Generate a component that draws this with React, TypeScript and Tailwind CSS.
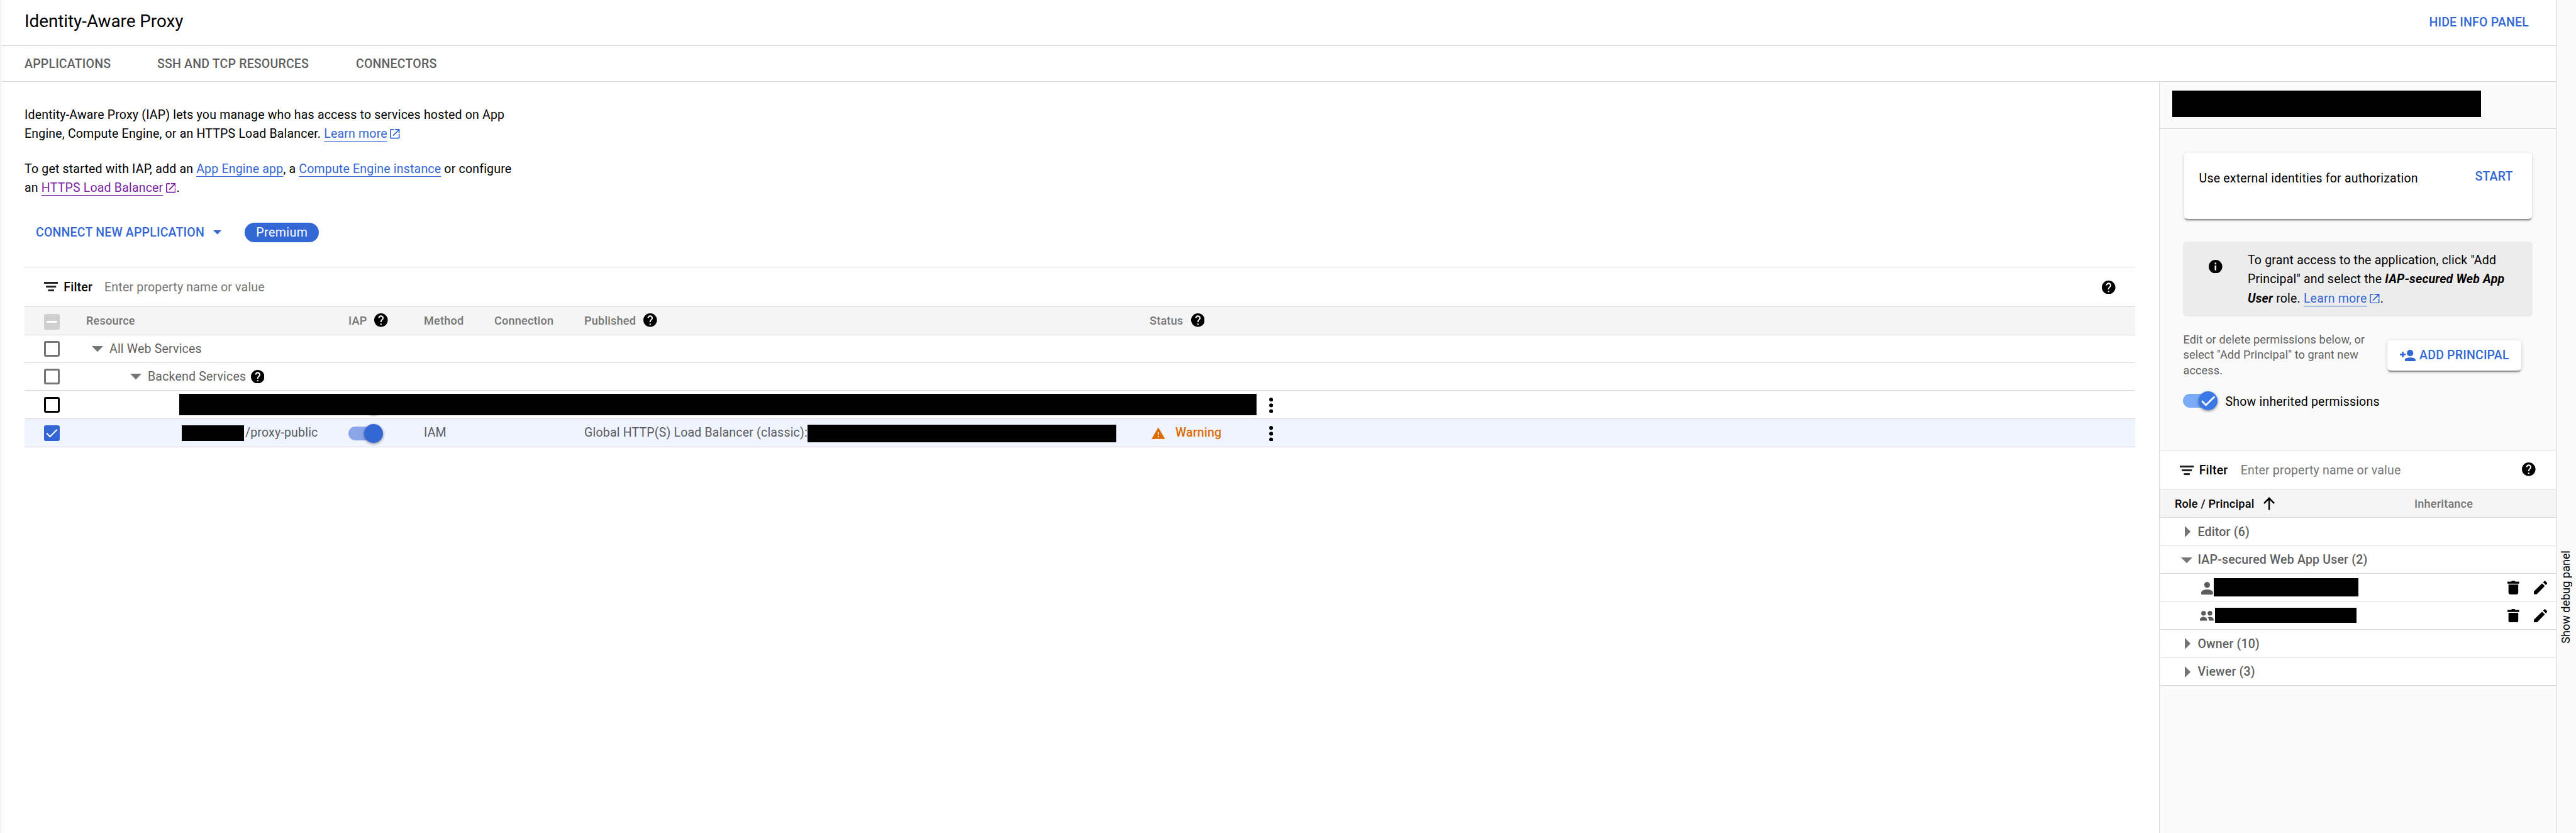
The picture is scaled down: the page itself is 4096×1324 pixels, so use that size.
import type { ReactNode } from 'react';

function HelpIcon({ className = '' }: { className?: string }) {
  return (
    <svg viewBox="2 2 20 20" className={`h-[21.6px] w-[21.6px] shrink-0 fill-black ${className}`}>
      <path d="M12 2C6.48 2 2 6.48 2 12s4.48 10 10 10 10-4.48 10-10S17.52 2 12 2zm1 17h-2v-2h2v2zm2.07-7.75-.9.92C13.45 12.9 13 13.5 13 15h-2v-.5c0-1.1.45-2.1 1.17-2.83l1.24-1.26c.37-.36.59-.86.59-1.41 0-1.1-.9-2-2-2s-2 .9-2 2H8c0-2.21 1.79-4 4-4s4 1.79 4 4c0 .88-.36 1.68-.93 2.25z" />
    </svg>
  );
}

function InfoIcon() {
  return (
    <svg viewBox="2 2 20 20" className="h-[21.6px] w-[21.6px] shrink-0 fill-black">
      <path d="M12 2C6.48 2 2 6.48 2 12s4.48 10 10 10 10-4.48 10-10S17.52 2 12 2zm1.2 15.6h-2.4v-7.2h2.4v7.2zm0-9h-2.4V6.2h2.4v2.4z" />
    </svg>
  );
}

function ExternalIcon() {
  return (
    <svg viewBox="3 3 18 18" className="mr-[1px] ml-[4.6px] inline-block h-[15.5px] w-[15.5px] fill-current align-[-1.4px]">
      <path d="M19 19H5V5h5V3H5a2 2 0 0 0-2 2v14a2 2 0 0 0 2 2h14a2 2 0 0 0 2-2v-7h-2v7z" />
      <path d="M12 3v2h5.59L8 14.6 9.4 16 19 6.41V10.5h2V3h-9z" />
    </svg>
  );
}

function FilterIcon({ className = '' }: { className?: string }) {
  return (
    <svg viewBox="0 0 22.3 15.1" className={`h-[15.1px] w-[22.3px] shrink-0 fill-[#212121] ${className}`}>
      <rect width="22.3" height="3" />
      <rect x="3.1" y="6.05" width="16.1" height="3" />
      <rect x="6.4" y="12.1" width="9.5" height="3" />
    </svg>
  );
}

function CaretDown({ className = '' }: { className?: string }) {
  return (
    <svg viewBox="0 0 18 9.2" className={`h-[9.2px] w-[18px] shrink-0 fill-[#757575] ${className}`}>
      <path d="M0 0h18L9 9.2z" />
    </svg>
  );
}

function CaretRight() {
  return (
    <svg viewBox="0 0 9.2 18" className="-mt-px ml-[6px] h-[18px] w-[9.2px] shrink-0 fill-[#757575]">
      <path d="M0 0v18L9.2 9z" />
    </svg>
  );
}

function MoreIcon() {
  return (
    <svg viewBox="10 4 4 16" className="mt-[2px] h-[24.6px] w-[6.3px] shrink-0 fill-black">
      <circle cx="12" cy="6" r="2" />
      <circle cx="12" cy="12" r="2" />
      <circle cx="12" cy="18" r="2" />
    </svg>
  );
}

function TrashIcon() {
  return (
    <svg viewBox="0 0 80 94" className="h-[21.8px] w-[18.6px] shrink-0 fill-black">
      <path d="M0 6h25l6-6h18l6 6h25v14H0z" />
      <path d="M7 26h67v54a14 14 0 0 1-14 14H21A14 14 0 0 1 7 80z" />
    </svg>
  );
}

function PencilIcon() {
  return (
    <svg viewBox="0 0 92 93" className="h-[21.6px] w-[21.4px] shrink-0 fill-black">
      <path d="M0 73l56-55 19 19-55 56H0z" />
      <path d="M63 11L72 2q3-3 6 0l12 12q3 3 0 6l-8 10z" />
    </svg>
  );
}

function Link({ children, visited = false }: { children: ReactNode; visited?: boolean }) {
  return (
    <span
      className={
        visited
          ? 'text-[#7b1fa2] underline decoration-[1.4px] underline-offset-[5px] [text-decoration-skip-ink:none]'
          : 'text-[#3367d6] underline decoration-[1.4px] underline-offset-[5px] [text-decoration-skip-ink:none]'
      }
    >
      {children}
    </span>
  );
}

function Check({ className }: { className: string }) {
  return (
    <svg viewBox="0 0 130 130" className={className} fill="none" stroke="white" strokeWidth="11">
      <path d="M22 65l27 28 59-58" />
    </svg>
  );
}

function Box({ tone = 'border-[#757575]' }: { tone?: string }) {
  return <span className={`h-[25px] w-[25px] rounded-[3px] border-[3px] bg-white ${tone}`} />;
}

const rowGrid =
  'grid grid-cols-[97px_418px_120px_112px_143px_899px_190px_1fr] items-center border-b border-[#d9d9d9]';

function Knob({ children, tone }: { children?: ReactNode; tone: string }) {
  return (
    <span className={`h-[30.5px] w-[30.5px] rounded-full shadow-[0_1.4px_4px_rgba(0,0,0,0.45)] ${tone}`}>{children}</span>
  );
}

function ResourceTable() {
  return (
    <div className="ml-[37px] w-[3356px] border-t border-[#d9d9d9]">
      <div className="flex h-[62px] items-center pt-px pr-[31.4px] pl-[31px]">
        <FilterIcon className="-mt-[1.5px]" />
        <span className="ml-[9px] w-[64.8px] font-medium">Filter</span>
        <span className="text-[#757575]">Enter property name or value</span>
        <HelpIcon className="ml-auto" />
      </div>
      <div className={`${rowGrid} h-[46px] border-t bg-[#f5f5f5] text-[18.12px] font-medium text-[#757575]`}>
        <div className="flex pl-[31px]">
          <span className="mt-[3px] flex h-[25px] w-[25px] items-center justify-center rounded-[3px] bg-[#cfcfcf]">
            <span className="h-[2.8px] w-[16.5px] rounded-full bg-white" />
          </span>
        </div>
        <span className="pl-px">Resource</span>
        <div className="flex items-center">
          IAP
          <HelpIcon className="-mt-[2px] ml-[12px]" />
        </div>
        <span>Method</span>
        <span>Connection</span>
        <div className="flex items-center">
          Published
          <HelpIcon className="-mt-[2px] ml-[12px]" />
        </div>
        <div className="flex items-center">
          Status
          <HelpIcon className="-mt-[2px] ml-[12.5px]" />
        </div>
      </div>
      <div className={`${rowGrid} h-[44px]`}>
        <div className="flex pl-[31px]">
          <Box />
        </div>
        <div className="flex items-center pl-[10px] text-[#616161]">
          <CaretDown className="mt-px mr-[10px]" />
          All Web Services
        </div>
      </div>
      <div className={`${rowGrid} h-[44px]`}>
        <div className="flex pl-[31px]">
          <Box />
        </div>
        <div className="flex items-center pl-[71px] text-[#616161]">
          <CaretDown className="mt-px mr-[10px]" />
          Backend Services
          <HelpIcon className="ml-[7.5px]" />
        </div>
      </div>
      <div className="flex h-[45px] items-center border-b border-[#d9d9d9] pl-[31px]">
        <Box tone="border-black" />
        <div className="relative ml-[190px] h-[33.4px] w-[1713px]">
          <span className="absolute top-[2.6px] left-[293.6px] h-[30.5px] w-[30.5px] rounded-full bg-[#3367d6] shadow-[0_1.4px_3px_rgba(0,0,0,0.5)]" />
          <div className="relative h-full w-full bg-black" />
        </div>
        <div className="ml-[20px] flex">
          <MoreIcon />
        </div>
      </div>
      <div className={`${rowGrid} h-[45px] bg-[#f0f4ff] text-[#5a5c61]`}>
        <div className="flex pl-[31px]">
          <span className="h-[25px] w-[25px] rounded-[3px] bg-[#3367d6]">
            <Check className="h-[25px] w-[25px]" />
          </span>
        </div>
        <div className="flex items-center pl-[153.3px]">
          <span className="mr-[2px] h-[25px] w-[98.7px] bg-black" />
          /proxy-public
        </div>
        <div className="flex items-center pt-[2px]">
          <span className="-mr-[20px] h-[21.6px] w-[44.5px] rounded-full bg-[#8aa5e8]" />
          <Knob tone="bg-[#3367d6]" />
        </div>
        <span>IAM</span>
        <span />
        <div className="flex items-center whitespace-nowrap">
          <span className="w-[355.4px]">Global HTTP(S) Load Balancer (classic):</span>
          <span className="mt-[2px] h-[28px] w-[490.4px] bg-black" />
        </div>
        <div className="flex items-center pl-[3.3px] font-medium text-[#dd6c00]">
          <svg viewBox="1 2 22 19" className="mr-[16px] h-[19px] w-[21.6px] fill-current">
            <path d="M1 21h22L12 2 1 21zm12-3h-2v-2h2v2zm0-4h-2v-4h2v4z" />
          </svg>
          Warning
        </div>
        <div className="flex">
          <MoreIcon />
        </div>
      </div>
    </div>
  );
}

const principalRow = 'flex items-center border-b border-[#d9d9d9] pt-[2px] font-medium text-[#5f5f5f]';

function RoleRow({ open = false, height, children }: { open?: boolean; height: string; children: ReactNode }) {
  return (
    <div className={`${principalRow} ${height}`}>
      <span className="ml-[33.6px] w-[26.9px]">{open ? <CaretDown className="mt-px" /> : <CaretRight />}</span>
      {children}
    </div>
  );
}

function RowActions() {
  return (
    <div className="-mt-px mr-[13.3px] ml-auto flex gap-[23.3px]">
      <TrashIcon />
      <PencilIcon />
    </div>
  );
}

function InfoPanel() {
  return (
    <div className="w-[631px] shrink-0 border-l border-[#d8d8d8] bg-[#fafafa]">
      <div className="h-[75px] border-b border-[#d6d6d6] pt-[14px] pl-[20px]">
        <div className="h-[42px] w-[490.7px] bg-black" />
      </div>
      <div className="h-[511px] border-b border-[#d9d9d9] pt-[38px] pl-[37px]">
        <div className="ml-[1.6px] flex h-[104.5px] w-[553px] items-start justify-between rounded-[5.6px] bg-white pr-[30px] pl-[24px] shadow-[0_4.2px_1.4px_-2.8px_rgba(0,0,0,0.3),0_2.8px_2.8px_rgba(0,0,0,0.14),0_1.4px_7px_rgba(0,0,0,0.1)]">
          <span className="leading-[82px]">Use external identities for authorization</span>
          <span className="leading-[75px] font-medium text-[#3367d6]">START</span>
        </div>
        <div className="mt-[36.5px] flex h-[119px] w-[556px] gap-[40.4px] rounded-[5.6px] bg-[#ececec] pl-[41px]">
          <div className="pt-[28.6px]">
            <InfoIcon />
          </div>
          <p className="pt-[14.7px] leading-[30.66px] whitespace-nowrap">
            To grant access to the application, click "Add
            <br />
            Principal" and select the <b className="italic">IAP-secured Web App</b>
            <br />
            <b className="italic">User</b> role. <Link>Learn more</Link>
            <span className="text-[#3367d6]">
              <ExternalIcon />
            </span>
            .
          </p>
        </div>
        <div className="mt-[24.5px] flex h-[74px] items-start">
          <p className="w-[325px] pl-[0.5px] text-[18.12px] leading-[24.7px] tracking-[0.1px] whitespace-nowrap text-[#616161]">
            Edit or delete permissions below, or
            <br />
            select "Add Principal" to grant new
            <br />
            access.
          </p>
          <div className="mt-[13px] flex h-[48.8px] w-[212.6px] items-center rounded-[5.6px] bg-white pt-px pl-[20px] font-medium text-[#3367d6] shadow-[0_4.2px_1.4px_-2.8px_rgba(0,0,0,0.3),0_2.8px_2.8px_rgba(0,0,0,0.14),0_1.4px_7px_rgba(0,0,0,0.12)]">
            <svg viewBox="1 4 22 16" className="-mt-px mr-[6.3px] h-[18px] w-[24.8px] fill-current">
              <circle cx="15.4" cy="8.6" r="4.5" />
              <path d="M8 20v-2.2c0-1.9 4-3 7.5-3s7.5 1.1 7.5 3V20z" />
              <path d="M4 6.7h2.2v2.9H9v2.2H6.2v2.9H4v-2.9H1V9.6h3z" />
            </svg>
            ADD PRINCIPAL
          </div>
        </div>
        <div className="mt-[20.4px] flex items-center">
          <span className="-mr-[20px] h-[21.6px] w-[44.5px] rounded-full bg-[#7baaf7]" />
          <Knob tone="bg-[#3b78e7]">
            <Check className="h-[30.5px] w-[30.5px]" />
          </Knob>
          <span className="mt-[4px] ml-[12.6px]">Show inherited permissions</span>
        </div>
      </div>
      <div className="bg-white">
        <div className="flex h-[63px] items-center border-b border-[#d9d9d9] pt-[2px] pr-[32px] pl-[32.4px]">
          <FilterIcon />
          <span className="ml-[8px] w-[66px] font-medium">Filter</span>
          <span className="text-[#757575]">Enter property name or value</span>
          <HelpIcon className="-mt-[4px] ml-auto" />
        </div>
        <div className="flex h-[44px] items-center border-b border-[#d9d9d9] bg-[#f5f5f5] pt-[1.5px] pl-[24px] text-[18.12px] font-medium">
          <div className="flex w-[381px] items-center">
            Role / Principal
            <svg viewBox="0 0 18.2 20.6" className="-mt-px ml-[15px] h-[20.6px] w-[18.2px]" fill="none" stroke="black" strokeWidth="2.4">
              <path d="M9.1 20.6V2M1 10.2l8.1-8.4 8.1 8.4" />
            </svg>
          </div>
          <span className="text-[#757575]">Inheritance</span>
        </div>
        <RoleRow height="h-[44px]">Editor (6)</RoleRow>
        <RoleRow open height="h-[45px]">
          IAP-secured Web App User (2)
        </RoleRow>
        <div className={`${principalRow} h-[44px] pl-[65.8px]`}>
          <svg viewBox="0 0 81 86" className="mt-px mr-[1.1px] h-[20px] w-[18.8px] shrink-0 fill-[#5b5b5b]">
            <circle cx="40.5" cy="20" r="20" />
            <path d="M5 86q-5 0-5-5v-7C0 60 20 52 40.5 52S81 60 81 74v7q0 5-5 5z" />
          </svg>
          <span className="-mt-[2px] h-[29.3px] w-[230px] bg-black" />
          <RowActions />
        </div>
        <div className={`${principalRow} h-[45px] pl-[64px]`}>
          <svg viewBox="0 0 94 67" className="mr-[2.7px] h-[15.6px] w-[21.8px] shrink-0 fill-[#5b5b5b]">
            <circle cx="25" cy="16" r="16" />
            <circle cx="69" cy="16" r="16" />
            <path d="M0 67v-8c0-11 12-18 24-18s24 7 24 18v8z" />
            <path d="M61 67v-8c0-7-3-11-8-15 5-2 10-3 16-3 13 0 25 7 25 18v8z" />
          </svg>
          <span className="-mt-[2px] h-[23.7px] w-[224.5px] bg-black" />
          <RowActions />
        </div>
        <RoleRow height="h-[44px]">Owner (10)</RoleRow>
        <RoleRow height="h-[45px]">Viewer (3)</RoleRow>
      </div>
    </div>
  );
}

export default function App() {
  return (
    <div className="flex h-[1324px] w-[4096px] overflow-hidden bg-white font-['Roboto',sans-serif] text-[19.51px] leading-[26px] tracking-[0.01em] text-black">
      <div className="ml-px flex w-[4063px] shrink-0 flex-col border-l border-[#d9d9d9]">
        <div className="flex h-[73px] shrink-0 items-start justify-between border-b border-[#d9d9d9] pr-[43px] pl-[37px]">
          <h1 className="text-[27.87px] leading-[68px] tracking-[-0.05px]">Identity-Aware Proxy</h1>
          <span className="leading-[71px] font-medium text-[#3367d6]">HIDE INFO PANEL</span>
        </div>
        <div className="flex h-[57px] shrink-0 items-center border-b border-[#d9d9d9] pt-px pl-[37px] font-medium text-[#5f5f5f]">
          <span className="w-[211px]">APPLICATIONS</span>
          <span className="w-[316px]">SSH AND TCP RESOURCES</span>
          <span>CONNECTORS</span>
        </div>
        <div className="flex min-h-0 flex-1">
          <div className="flex-1">
            <div className="h-[294px] pt-[37.5px] pl-[37px]">
              <p className="leading-[30.66px]">
                Identity-Aware Proxy (IAP) lets you manage who has access to services hosted on App
                <br />
                Engine, Compute Engine, or an HTTPS Load Balancer. <Link>Learn more</Link>
                <span className="text-[#3367d6]">
                  <ExternalIcon />
                </span>
              </p>
              <p className="mt-[24.9px] leading-[30.66px]">
                To get started with IAP, add an <Link>App Engine app</Link>, a <Link>Compute Engine instance</Link> or configure
                <br />
                an <Link visited>HTTPS Load Balancer</Link>
                <span className="text-[#7b1fa2]">
                  <ExternalIcon />
                </span>
                .
              </p>
              <div className="mt-[39.2px] flex h-[30.6px] items-center pl-[18px]">
                <span className="font-medium text-[#3367d6]">CONNECT NEW APPLICATION</span>
                <svg viewBox="0 0 14 7" className="ml-[14px] h-[6.6px] w-[13.2px] fill-[#3367d6]">
                  <path d="M0 0h14L7 7z" />
                </svg>
                <span className="ml-[37.2px] flex h-[30.6px] w-[117.8px] items-center justify-center rounded-full bg-[#3367d6] tracking-[0.45px] text-white">
                  Premium
                </span>
              </div>
            </div>
            <ResourceTable />
          </div>
          <InfoPanel />
        </div>
      </div>
      <div className="flex flex-1 flex-col items-center justify-end border-l border-[#d8d8d8] bg-[#fafafa] pr-px pb-[301px]">
        <span className="rotate-180 text-[18.12px] tracking-normal whitespace-nowrap [writing-mode:vertical-rl]">Show debug panel</span>
      </div>
    </div>
  );
}
